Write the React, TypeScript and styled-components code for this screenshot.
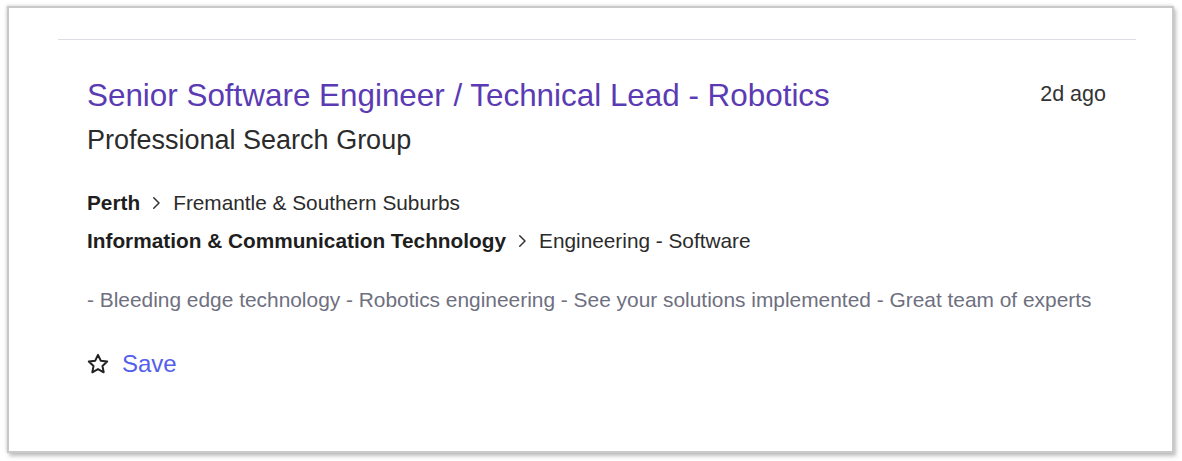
import React from "react";
import styled, { createGlobalStyle } from "styled-components";

const Global = createGlobalStyle`
  html, body { margin: 0; padding: 0; background: #ffffff; }
  body { font-family: "Liberation Sans", Arial, sans-serif; }
`;

const Page = styled.div`
  width: 1182px;
  height: 461px;
  padding: 6px 8px 0 7px;
  box-sizing: border-box;
`;

const Frame = styled.div`
  width: 1167px;
  height: 447px;
  box-sizing: border-box;
  border: 2px solid #c9c9c9;
  box-shadow: 2px 3px 4px rgba(0, 0, 0, 0.25), -1px -1px 3px rgba(0, 0, 0, 0.12);
  background: #fff;
  padding: 0 36px 0 49px;
  display: flex;
  flex-direction: column;
`;

const Divider = styled.div`
  height: 1px;
  background: #dcdde6;
  margin-top: 31px;
`;

const Card = styled.div`
  padding: 36px 30px 0 29px;
  display: flex;
  flex-direction: column;
`;

const Header = styled.div`
  display: flex;
  justify-content: space-between;
  align-items: flex-start;
`;

const Title = styled.a`
  color: #5b3bb3;
  font-size: 31.4px;
  line-height: 40px;
  text-decoration: none;
`;

const Age = styled.span`
  color: #333;
  font-size: 21.5px;
  line-height: 30px;
  margin-top: 3px;
`;

const Company = styled.div`
  color: #2b2b2b;
  font-size: 27px;
  line-height: 36px;
  margin-top: 6px;
`;

const Crumbs = styled.div`
  display: flex;
  flex-direction: column;
  gap: 6px;
  margin-top: 29px;
`;

const Crumb = styled.div`
  display: flex;
  align-items: center;
  font-size: 20.8px;
  line-height: 32px;
  color: #2b2b2b;
`;

const Strong = styled.span`
  font-weight: bold;
  color: #1e1e1e;
`;

const Chevron = styled.svg`
  width: 18px;
  height: 18px;
  margin: 0 8px 0 7px;
`;

const Desc = styled.p`
  margin: 27px 0 0;
  color: #6e7080;
  font-size: 20.9px;
  line-height: 32px;
`;

const SaveRow = styled.div`
  display: flex;
  align-items: center;
  gap: 12px;
  margin-top: 31px;
`;

const Star = styled.svg`
  width: 24px;
  height: 24px;
  margin-left: -1px;
`;

const SaveLink = styled.span`
  color: #5360ec;
  font-size: 24px;
  line-height: 34px;
`;

const ChevronIcon = () => (
  <Chevron viewBox="0 0 24 24" fill="none" stroke="#333" strokeWidth="2" strokeLinecap="round" strokeLinejoin="round">
    <path d="M9 5l7 7-7 7" />
  </Chevron>
);

export default function App() {
  return (
    <>
      <Global />
      <Page>
        <Frame>
          <Divider />
          <Card>
            <Header>
              <Title href="#">Senior Software Engineer / Technical Lead - Robotics</Title>
              <Age>2d ago</Age>
            </Header>
            <Company>Professional Search Group</Company>
            <Crumbs>
              <Crumb>
                <Strong>Perth</Strong>
                <ChevronIcon />
                Fremantle &amp; Southern Suburbs
              </Crumb>
              <Crumb>
                <Strong>Information &amp; Communication Technology</Strong>
                <ChevronIcon />
                Engineering - Software
              </Crumb>
            </Crumbs>
            <Desc>
              - Bleeding edge technology - Robotics engineering - See your solutions implemented - Great team of experts
            </Desc>
            <SaveRow>
              <Star viewBox="0 0 24 24" fill="none" stroke="#222" strokeWidth="2" strokeLinejoin="round">
                <path d="M12 2.8l2.75 5.9 6.45.78-4.75 4.42 1.22 6.38L12 17.1l-5.67 3.18 1.22-6.38L2.8 9.48l6.45-.78z" />
              </Star>
              <SaveLink>Save</SaveLink>
            </SaveRow>
          </Card>
        </Frame>
      </Page>
    </>
  );
}
